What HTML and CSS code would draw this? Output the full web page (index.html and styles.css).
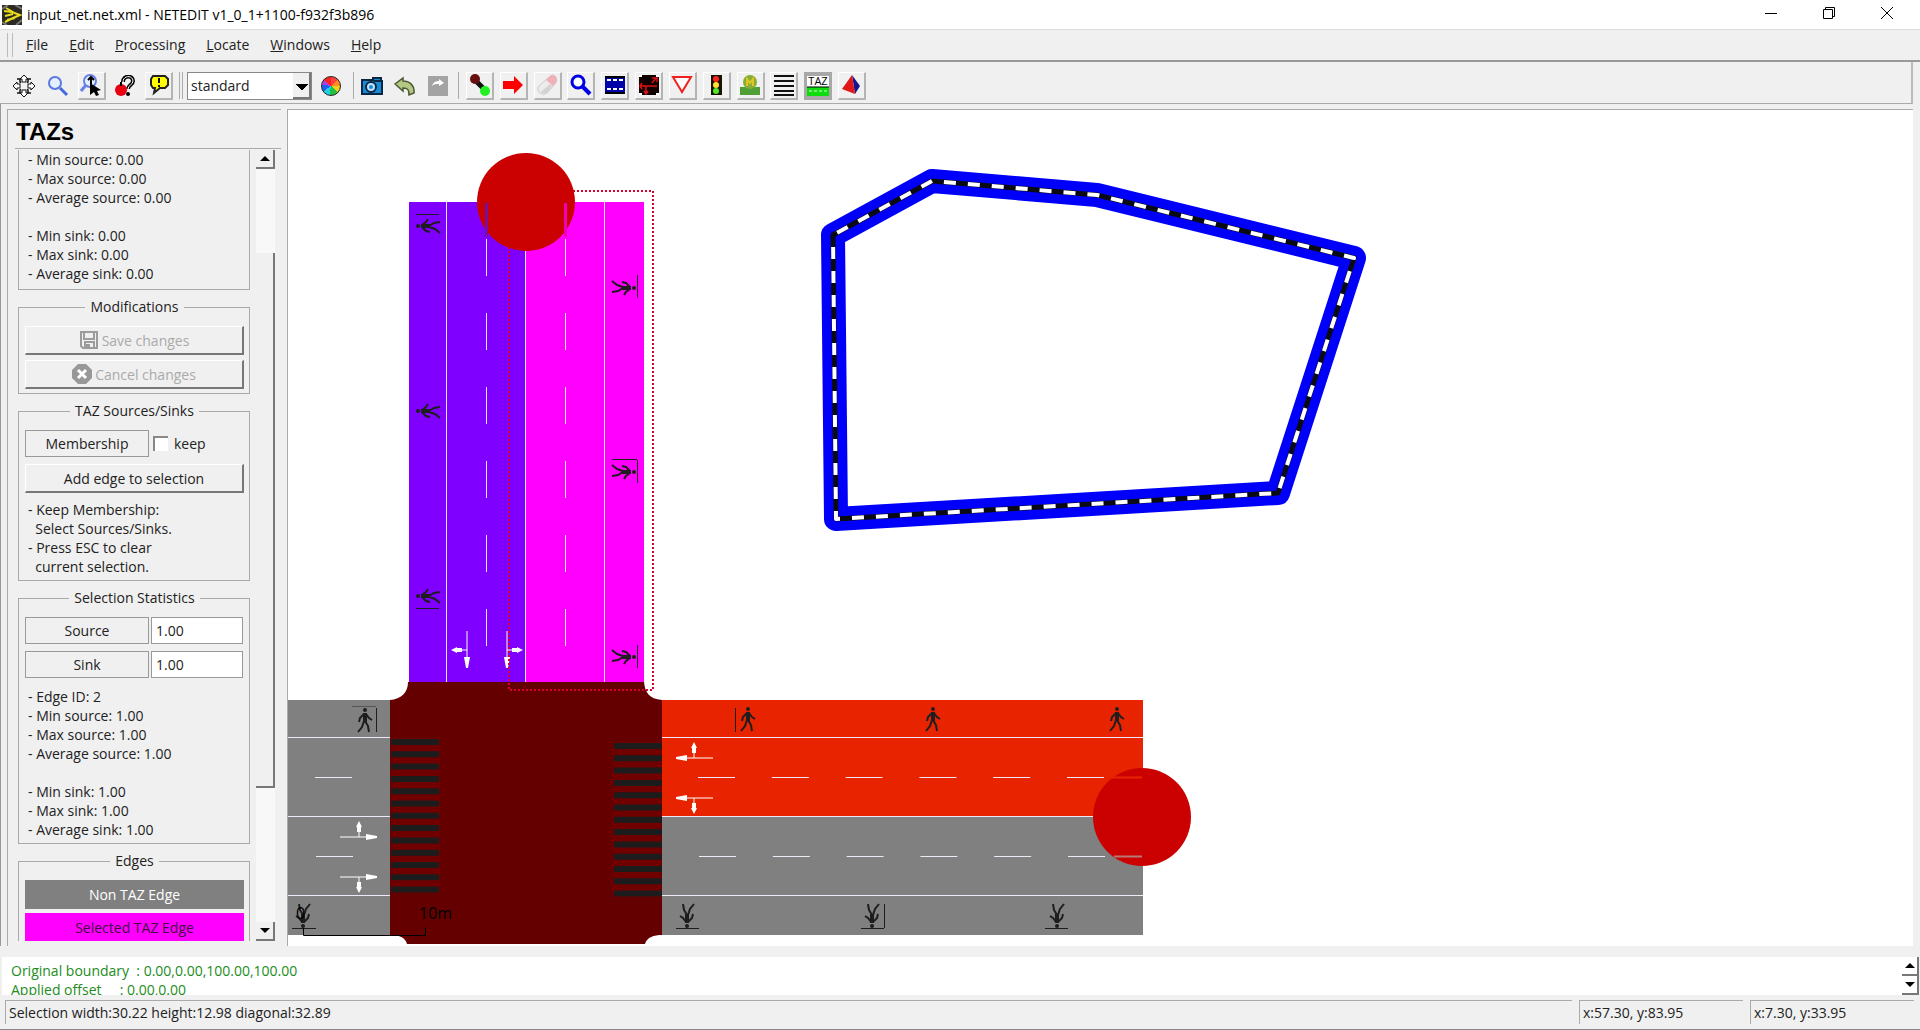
FILE: index.html
```html
<!DOCTYPE html>
<html lang="en">
<head>
  <meta charset="UTF-8" />
  <meta name="viewport" content="width=device-width, initial-scale=1.0"/>
  <title>input_net.net.xml - NETEDIT</title>
  <link rel="stylesheet" href="styles.css">
</head>
<body>

<!-- Title bar -->
<header class="titlebar">
  <svg class="app-icon" viewBox="0 0 20 20"><rect width="20" height="20" fill="#2b2922"/><path d="M0 4l6-4M13 0l7 4M0 17l5 3M14 20l6-5" stroke="#777" stroke-width="2"/><path d="M2 6l8 1 8 3-7 3-8 4M4 3l7 4M3 11l8-2M5 15l8-2" fill="none" stroke="#e8dc1c" stroke-width="2"/></svg>
  <h1>input_net.net.xml - NETEDIT v1_0_1+1100-f932f3b896</h1>
  <div class="window-buttons">
    <button aria-label="Minimize"><svg width="14" height="14"><path d="M1 7.500h12" stroke="#000"/></svg></button>
    <button aria-label="Restore"><svg width="14" height="14"><path d="M1.500 3.500h9v9h-9zM3.500 3.500v-2h9v9h-2" fill="none" stroke="#000"/></svg></button>
    <button aria-label="Close"><svg width="14" height="14"><path d="M1 1l12 12M13 1L1 13" stroke="#000"/></svg></button>
  </div>
</header>

<!-- Menu -->
<nav class="menubar">
  <span class="grip"></span>
  <button><u>F</u>ile</button>
  <button><u>E</u>dit</button>
  <button><u>P</u>rocessing</button>
  <button><u>L</u>ocate</button>
  <button><u>W</u>indows</button>
  <button><u>H</u>elp</button>
</nav>

<!-- Toolbar -->
<div class="toolbar">
  <div class="tools tools-view">
    <button aria-label="Recenter"><svg viewBox="0 0 22 22"><path d="M11 0l4 4h-2v3H9V4H7zM11 22l4-4h-2v-3H9v3H7zM0 11l4-4v2h3v4H4v2zM22 11l-4-4v2h-3v4h3v2z" fill="#fff" stroke="#111"/><path d="M4 4h3v3l1 1M18 4h-3v3l-1 1M4 18h3v-3l1-1M18 18h-3v-3l-1-1" fill="none" stroke="#111" stroke-width="1.500"/></svg></button>
    <button aria-label="Zoom"><svg viewBox="0 0 22 22"><circle cx="8" cy="8" r="6" fill="#e4f0ff" stroke="#5a78e0" stroke-width="2"/><path d="M13 13l7 7" stroke="#4468e0" stroke-width="3"/></svg></button>
    <button class="raised" aria-label="Zoom style"><svg viewBox="0 0 22 22"><circle cx="10" cy="7" r="6" fill="#e4f0ff" stroke="#6a80e8" stroke-width="2"/><path d="M6 11l-5 6" stroke="#6a80e8" stroke-width="3"/><path d="M11 3v7M8 6l3-3 3 3" fill="none" stroke="#000" stroke-width="2"/><path d="M10 9l11 7-4 1 2 4-3 1-2-4-4 3z" fill="#000"/></svg></button>
    <button aria-label="Tooltip"><svg viewBox="0 0 22 22"><path d="M9 7c0-7 10-7 10-1 0 4-5 4-5 8" fill="none" stroke="#000" stroke-width="4"/><path d="M9 7c0-7 10-7 10-1 0 4-5 4-5 8" fill="none" stroke="#fff" stroke-width="1"/><circle cx="14" cy="19" r="2"/><circle cx="7" cy="15" r="6" fill="#e80010"/><path d="M7 7v4" stroke="#000" stroke-width="2"/></svg></button>
    <button class="raised" aria-label="Messages"><svg viewBox="0 0 22 22"><path d="M5 2h12l3 3v6l-3 3h-5l-6 5 1-5H5l-2-3V5z" fill="#ffff00" stroke="#222" stroke-width="2"/><path d="M11 4v5M11 11v2" stroke="#111" stroke-width="2"/></svg></button>
  </div>
  <span class="sep double"></span>
  <select class="scheme" aria-label="Coloring scheme"><option>standard</option></select>
  <button class="wheel-button" aria-label="Edit colors"><span class="wheel"></span></button>
  <span class="sep"></span>
  <div class="tools tools-edit">
    <button aria-label="Snapshot"><svg viewBox="0 0 22 22"><path d="M1 5h11V3h8v3h1v13H1z" fill="#168bd8" stroke="#0c2744" stroke-width="2"/><path d="M13 5h6v2h-6z" fill="#0c2744"/><circle cx="10" cy="12" r="5" fill="#bfe4ff" stroke="#0c2744" stroke-width="2"/><circle cx="10" cy="12" r="2" fill="#168bd8"/></svg></button>
    <button aria-label="Undo"><svg viewBox="0 0 22 22"><path d="M1 9l8-6v3c7 0 12 5 11 12l-5 2c0-5-1-7-6-7v3z" fill="#b4c783" stroke="#4b5932" stroke-width="1.500"/></svg></button>
    <button aria-label="Redo"><svg viewBox="0 0 22 22"><path d="M1 1h20v20H1z" fill="#a3a3a3"/><path d="M5 11c1-4 4-5 7-5V4l5 4-5 3V9c-3 0-5 0-7 2z" fill="#fff"/></svg></button>
  </div>
  <span class="sep"></span>
  <div class="tools tools-mode">
    <button class="raised" aria-label="Create edge"><svg viewBox="0 0 22 22"><path d="M6 6l10 10" stroke="#111" stroke-width="5"/><circle cx="6" cy="5" r="5" fill="#681010"/><circle cx="16" cy="17" r="5" fill="#22ef22"/></svg></button>
    <button class="raised" aria-label="Move"><svg viewBox="0 0 22 22"><path d="M1 7h11V2l9 9-9 9v-5H1z" fill="#ff0000"/></svg></button>
    <button class="raised" aria-label="Delete"><svg viewBox="0 0 22 22"><path d="M13 3q4-4 7 0 2 4-1 7l-8 9q-4 3-7 0-4-4-1-7z" fill="#ececec" stroke="#ccc"/><path d="M13 3q4-4 7 0 2 4-1 7l-2 2-7-6z" fill="#efb0b8"/><path d="M5 18q3 3 6 1l5-7-2-2z" fill="#d2d2d2"/></svg></button>
    <button class="raised" aria-label="Inspect"><svg viewBox="0 0 22 22"><circle cx="8" cy="8" r="6" fill="#fff" stroke="#0000e6" stroke-width="3"/><path d="M12 12l8 8" stroke="#0000e6" stroke-width="4"/></svg></button>
    <button class="raised" aria-label="Select"><svg viewBox="0 0 22 22"><path d="M1 2h20v18H1z" fill="#0000a8"/><path d="M1 3h20M1 19h20" stroke="#000" stroke-width="2"/><path d="M3 6h16M3 15h16" stroke="#fff" stroke-width="2" stroke-dasharray="4 2"/></svg></button>
    <button class="raised" aria-label="Connect"><svg viewBox="0 0 22 22"><path d="M1 1h20v20H1z" fill="#100"/><path d="M2 12h17M8 12v8M14 9l4-5M14 4h5v4M6 17l2 3 2-3M4 9l-2 3 2 3" fill="none" stroke="#e01010" stroke-width="1.500"/><path d="M1 2h3M18 2h3M1 20h3M18 20h3" stroke="#fff" stroke-width="2"/></svg></button>
    <button class="raised" aria-label="Prohibitions"><svg viewBox="0 0 22 22"><path d="M2 3h18l-9 15z" fill="#fff" stroke="#f02020" stroke-width="2"/></svg></button>
    <button class="raised" aria-label="Traffic lights"><svg viewBox="0 0 22 22"><path d="M6 1h11v20H6z" fill="#181200"/><circle cx="11" cy="5" r="3" fill="#ff2222"/><circle cx="11" cy="11" r="3" fill="#ffe033"/><circle cx="11" cy="17" r="3" fill="#50e825"/></svg></button>
    <button class="raised" aria-label="Additionals"><svg viewBox="0 0 22 22"><path d="M1 13h5l3-2h4l3 2h5v8H1z" fill="#4f9f36"/><circle cx="11" cy="8" r="7" fill="#86ad38"/><path d="M8 12V5l3 4 3-4v7" fill="none" stroke="#e0c820" stroke-width="2"/></svg></button>
    <button class="raised" aria-label="Crossings"><svg viewBox="0 0 22 22"><path d="M1 2h20M1 7h20M1 12h20M1 17h20M1 21h20" stroke="#111" stroke-width="2"/></svg></button>
    <button class="pressed" aria-label="TAZ"><svg viewBox="0 0 24 24"><path d="M1 2h22v20H1z" fill="#fff"/><path d="M1 13h22v9H1z" fill="#0ddd0d"/><path d="M1 13h22" stroke="#000"/><path d="M3 17h19" stroke="#d8ffd8" stroke-dasharray="3 2"/><text x="12" y="11" font-size="11" text-anchor="middle">TAZ</text></svg></button>
    <button class="raised" aria-label="Shapes"><svg viewBox="0 0 22 22"><path d="M12 1l8 11-5 8z" fill="#151590"/><path d="M12 1L2 15l13 5z" fill="#e01818"/></svg></button>
  </div>
</div>

<main class="workspace">
  <!-- TAZ frame -->
  <aside class="sidebar">
    <h2>TAZs</h2>
    <div class="scroll-area">
      <div class="frames">
        <div class="group group-cut">
          <p class="info">- Min source: 0.00
- Max source: 0.00
- Average source: 0.00

- Min sink: 0.00
- Max sink: 0.00
- Average sink: 0.00</p>
        </div>

        <fieldset class="group">
          <legend>Modifications</legend>
          <button class="push" disabled><svg width="20" height="20" viewBox="0 0 20 20"><path d="M2 2h16v16H4l-2-2zM5 2v7h10V2M6 18v-6h9v6" fill="none" stroke="#9c9c9c" stroke-width="2"/><path d="M7 14h4v4H7z" fill="#9c9c9c"/></svg>Save changes</button>
          <button class="push" disabled><svg width="20" height="20" viewBox="0 0 20 20"><path d="M6 0h8l6 6v8l-6 6H6l-6-6V6z" fill="#989898"/><path d="M6 6l8 8M14 6l-8 8" stroke="#fff" stroke-width="3"/></svg>Cancel changes</button>
        </fieldset>

        <fieldset class="group">
          <legend>TAZ Sources/Sinks</legend>
          <div class="row">
            <button class="flat">Membership</button>
            <label class="keep"><input type="checkbox">keep</label>
          </div>
          <button class="push">Add edge to selection</button>
          <p class="info">- Keep Membership:
  Select Sources/Sinks.
- Press ESC to clear
  current selection.</p>
        </fieldset>

        <fieldset class="group">
          <legend>Selection Statistics</legend>
          <div class="row">
            <label class="flat" for="source">Source</label>
            <input class="value" id="source" type="text" value="1.00">
          </div>
          <div class="row">
            <label class="flat" for="sink">Sink</label>
            <input class="value" id="sink" type="text" value="1.00">
          </div>
          <p class="info">- Edge ID: 2
- Min source: 1.00
- Max source: 1.00
- Average source: 1.00

- Min sink: 1.00
- Max sink: 1.00
- Average sink: 1.00</p>
        </fieldset>

        <fieldset class="group">
          <legend>Edges</legend>
          <div class="swatch non-taz">Non TAZ Edge</div>
          <div class="swatch selected-taz">Selected TAZ Edge</div>
        </fieldset>
      </div>
      <div class="scrollbar">
        <button class="arrow up" aria-label="Scroll up"></button>
        <div class="track"><div class="thumb"></div></div>
        <button class="arrow down" aria-label="Scroll down"></button>
      </div>
    </div>
  </aside>

  <!-- Network view -->
  <section class="view">
    <svg class="network" role="img" aria-label="Road network">
      <defs>
        <g id="walker">
          <circle cx="1" cy="-10" r="2" fill="#1e1e1e"/>
          <path d="M0-6l-4 4-1 4M2-6l3 4 3 2M0 1l-2 6-4 5M1 1l3 5 1 6" fill="none" stroke="#1e1e1e" stroke-width="2"/>
          <path d="M-1-7h4l0 9h-4z" fill="#1e1e1e"/>
        </g>
        <g id="turn">
          <path d="M0 0v28M0 19h-6" stroke="#fff" stroke-width="1"/>
          <path d="M-3 26h6l-2 11h-2zM-5 17v4h-5v1l-6-3 6-3v1z" fill="#fff"/>
        </g>
      </defs>
      <g transform="translate(-288 -110)">
        <!-- roads -->
        <rect x="287" y="700" width="104" height="235" fill="#808080"/>
        <rect x="409" y="202" width="117" height="480" fill="#7f00ff"/>
        <rect x="526" y="202" width="118" height="480" fill="#ff00ff"/>
        <rect x="662" y="700" width="481" height="117" fill="#e82400"/>
        <rect x="662" y="817" width="481" height="118" fill="#808080"/>
        <path d="M408 682h236c1 10 5 17 18 18v235c-8 0-15 2-17 9H407c-2-7-8-9-17-9V700c11-1 18-7 18-18z" fill="#640000"/>

        <!-- crossings -->
        <rect x="391" y="738" width="49" height="155" fill="#700000"/>
        <rect x="613" y="742" width="49" height="155" fill="#700000"/>
        <path d="M415 739v154" stroke="#1c1c1c" stroke-width="48" stroke-dasharray="6 6.300"/>
        <path d="M638 743v154" stroke="#1c1c1c" stroke-width="48" stroke-dasharray="6 6.300"/>

        <!-- lane borders -->
        <g stroke="#f0e8f4" stroke-width="1">
          <path d="M446.500 202v480M525.500 202v480M604.500 202v480"/>
          <path d="M287 737.500h103M287 816.500h103M287 895.500h103M662 737.500h481M662 816.500h481M662 895.500h481"/>
          <path d="M486.500 239v407M565.500 239v407" stroke-dasharray="37 37"/>
          <path d="M698 777.500h408M699 856.500h407" stroke-dasharray="37 36.800"/>
          <path d="M315 777.500h37M316 856.500h37"/>
        </g>
        <use href="#turn" transform="translate(467 631)"/>
        <use href="#turn" transform="translate(507 631) scale(-1 1)"/>
        <use href="#turn" transform="translate(713 758) rotate(90)"/>
        <use href="#turn" transform="translate(713 798) rotate(90) scale(-1 1)"/>
        <use href="#turn" transform="translate(340 837) rotate(-90) scale(-1 1)"/>
        <use href="#turn" transform="translate(340 877) rotate(-90)"/>

        <!-- sidewalks -->
        <use href="#walker" transform="translate(364 720)"/>
        <use href="#walker" transform="translate(747 719)"/>
        <use href="#walker" transform="translate(932 719)"/>
        <use href="#walker" transform="translate(1116 719)"/>
        <use href="#walker" transform="translate(304 916) rotate(180)"/>
        <use href="#walker" transform="translate(688 916) rotate(180)"/>
        <use href="#walker" transform="translate(873 916) rotate(180)"/>
        <use href="#walker" transform="translate(1058 916) rotate(180)"/>
        <use href="#walker" transform="translate(624 287) rotate(90)"/>
        <use href="#walker" transform="translate(624 471) rotate(90)"/>
        <use href="#walker" transform="translate(624 656) rotate(90)"/>
        <use href="#walker" transform="translate(428 227) rotate(-90)"/>
        <use href="#walker" transform="translate(428 412) rotate(-90)"/>
        <use href="#walker" transform="translate(428 597) rotate(-90)"/>
        <path d="M376.500 708v24M735.500 708v24M884.500 904v24M292 928.500h24M676 928.500h23M861 928.500h23M1045 928.500h23M637.500 275v23M637.500 460v23M637.500 645v23M612 459.500h25M416 214.500h23M416 608.500h23" stroke="#1e1e1e"/>
        <path d="M352 706.500h24" stroke="#555"/>

        <!-- scale bar -->
        <path d="M303.500 928v7.500h122v-8" fill="none" stroke="#000"/>
        <text x="296" y="919" class="scale">0</text>
        <text x="419" y="919" class="scale">10m</text>

        <!-- selection frame and dead ends -->
        <rect x="509" y="191" width="144" height="499" fill="none" stroke="#d80030" stroke-width="2" stroke-dasharray="2 2"/>
        <circle cx="526" cy="202" r="49" fill="#cb0000"/>
        <circle cx="1142" cy="817" r="49" fill="#cb0000"/>
        <path d="M486.500 203v34" stroke="#7d0d9c" stroke-width="3"/>
        <path d="M565.500 203v34" stroke="#f000b4" stroke-width="3"/>
        <path d="M1110 777.500h32" stroke="#e82400" stroke-width="2"/>
        <path d="M1114 856.500h28" stroke="#b87878" stroke-width="2"/>

        <!-- TAZ shape -->
        <g fill="none" stroke-linejoin="round">
          <path d="M833 235L836 519 1278 493 1354 258 1097 195 932 181z" stroke="#0000fa" stroke-width="24"/>
          <path d="M833 235L836 519 1278 493 1354 258 1097 195 932 181z" stroke="#0a0a14" stroke-width="5"/>
          <path d="M833 235L836 519 1278 493 1354 258 1097 195 932 181z" stroke="#fff" stroke-width="4" stroke-dasharray="12" stroke-dashoffset="12"/>
        </g>
      </g>
    </svg>
  </section>
</main>

<!-- Messages -->
<section class="messages">
  <pre>Original boundary  : 0.00,0.00,100.00,100.00
Applied offset     : 0.00,0.00</pre>
  <div class="spin">
    <button class="arrow up" aria-label="Previous message"></button>
    <button class="arrow down" aria-label="Next message"></button>
  </div>
</section>

<footer class="statusbar">
  <span class="status-text">Selection width:30.22 height:12.98 diagonal:32.89</span>
  <span class="coords">x:57.30, y:83.95</span>
  <span class="coords">x:7.30, y:33.95</span>
</footer>

</body>
</html>
```
FILE: styles.css
```css
* { margin: 0; padding: 0; box-sizing: border-box; }
body {
  height: 100vh;
  display: flex;
  flex-direction: column;
  overflow: hidden;
  font-family: "Open Sans", "Noto Sans", sans-serif;
  font-size: 14px;
  color: #222;
  background: #f0f0f0;
}
button, input, select {
  font: inherit;
  color: inherit;
  border: none;
  background: none;
}

.titlebar {
  height: 29px;
  display: flex;
  align-items: center;
  padding-left: 2px;
  background: #fff;
}
.app-icon { width: 20px; height: 20px; }
.titlebar h1 {
  flex: 1;
  margin-left: 5px;
  font-size: 14px;
  font-weight: normal;
  color: #000;
}
.window-buttons { display: flex; padding-right: 4px; }
.window-buttons button { width: 58px; height: 29px; }

.menubar {
  height: 33px;
  display: flex;
  align-items: center;
  gap: 21px;
  border-top: 1px solid #ddd;
  border-bottom: 2px solid #999;
}
.grip {
  width: 6px;
  height: 24px;
  margin-left: 7px;
  margin-right: -8px;
  border-left: 1px solid #bbb;
  border-right: 1px solid #bbb;
}
.menubar button { line-height: 20px; }

.toolbar {
  height: 42px;
  display: flex;
  align-items: center;
  padding: 6px 0 0 10px;
  margin-right: 7px;
  border-right: 2px solid #bbb;
  border-bottom: 1px solid #aaa;
}
.tools {
  display: flex;
  justify-content: space-between;
}
.tools-view { width: 163px; }
.tools-edit { width: 94px; margin-left: 4px; }
.tools-mode { width: 400px; margin-left: 7px; }
.tools button {
  width: 28px;
  height: 28px;
  display: flex;
  align-items: center;
  justify-content: center;
}
.tools svg { width: 22px; height: 22px; }
.tools .raised {
  border-top: 1px solid #fff;
  border-left: 1px solid #fff;
  border-right: 2px solid #b4b4b4;
  border-bottom: 2px solid #b4b4b4;
}
.tools .pressed { background: #a8a8a8; }
.tools .pressed svg { width: 24px; height: 24px; }
.sep {
  width: 1px;
  height: 27px;
  margin-left: 6px;
  background: #aaa;
}
.sep.double {
  width: 4px;
  background: none;
  border-left: 1px solid #aaa;
  border-right: 1px solid #aaa;
}
.scheme {
  width: 125px;
  height: 28px;
  margin-left: 4px;
  padding-left: 3px;
  appearance: none;
  border: 1px solid #888;
  background:
    linear-gradient(#777, #777) right 0 top 0 / 2px 100% no-repeat,
    linear-gradient(#777, #777) right 0 bottom 0 / 18px 2px no-repeat,
    conic-gradient(from -45deg at 50% 100%, #000 90deg, transparent 0) right 3px top 11px / 12px 6px no-repeat,
    linear-gradient(#f0f0f0, #f0f0f0) right 0 top 0 / 18px 100% no-repeat,
    #fff;
}
.wheel-button {
  width: 30px;
  height: 28px;
  margin: 0 1px 0 4px;
  display: grid;
  place-items: center;
}
.wheel {
  width: 20px;
  height: 20px;
  border: 1px solid #222;
  border-radius: 50%;
  background: conic-gradient(#ff4040 0 45deg, #ff8c20 0 90deg, #f0d020 0 135deg, #20c040 0 190deg, #20d0e0 0 235deg, #2060f0 0 280deg, #b040e0 0 310deg, #ff2020 0);
}

.workspace {
  flex: 1;
  min-height: 0;
  display: flex;
  gap: 6px;
  padding: 5px 7px 0 6px;
  border-left: 1px solid #999;
}
.sidebar {
  width: 274px;
  display: flex;
  flex-direction: column;
  border-top: 1px solid #aaa;
  border-left: 1px solid #aaa;
}
.sidebar h2 {
  height: 39px;
  margin: 0 0 1px 7px;
  padding-left: 1px;
  line-height: 44px;
  font-family: "Liberation Sans", Arial, sans-serif;
  font-size: 24px;
  color: #000;
  border-bottom: 1px solid #aaa;
}
.scroll-area {
  flex: 1;
  min-height: 0;
  display: flex;
  justify-content: space-between;
  padding: 0 6px 5px 10px;
}
.frames {
  width: 232px;
  display: flex;
  flex-direction: column;
  gap: 5px;
  overflow: hidden;
}
.group {
  flex-shrink: 0;
  padding: 7px 5px 4px 6px;
  border: 1px solid #aaa;
}
.group legend {
  margin: 0 auto;
  padding: 0 5px;
  line-height: 24px;
}
.group-cut { border-top: none; padding-top: 0; padding-bottom: 6px; }
.info {
  padding-left: 3px;
  line-height: 19px;
  white-space: pre;
}
.push {
  width: 100%;
  height: 29px;
  display: flex;
  align-items: center;
  justify-content: center;
  gap: 3px;
  border-top: 1px solid #fff;
  border-left: 1px solid #fff;
  border-right: 2px solid #777;
  border-bottom: 2px solid #777;
}
.push + .push { margin-top: 5px; }
.push:disabled { color: #aaa; }
.row {
  display: flex;
  align-items: center;
  gap: 2px;
  margin-bottom: 7px;
}
.flat {
  width: 124px;
  height: 27px;
  line-height: 25px;
  text-align: center;
  border: 1px solid #999;
}
.value {
  width: 92px;
  height: 27px;
  padding-left: 4px;
  background: #fff;
  border: 1px solid #999;
}
.keep {
  display: flex;
  align-items: center;
  gap: 6px;
  padding-left: 2px;
}
.keep input {
  width: 15px;
  height: 15px;
  appearance: none;
  background: #fff;
  border-top: 2px solid #888;
  border-left: 2px solid #888;
}
.push + .info { padding-top: 7px; }
.row + .info { padding-top: 2px; }
.swatch {
  height: 29px;
  line-height: 29px;
  text-align: center;
}
.swatch + .swatch { margin-top: 4px; }
.non-taz { background: #808080; color: #fff; }
.selected-taz { background: #ff00ff; color: #401040; }

.scrollbar {
  width: 19px;
  display: flex;
  flex-direction: column;
}
.arrow {
  width: 19px;
  height: 19px;
  display: grid;
  place-items: center;
  border-right: 2px solid #777;
  border-bottom: 2px solid #777;
}
.arrow::before {
  content: "";
  border: 5px solid transparent;
}
.arrow.up::before { border-top: none; border-bottom-color: #000; }
.arrow.down::before { border-bottom: none; border-top-color: #000; }
.track { flex: 1; padding-top: 84px; background: #f8f8f8; }
.thumb {
  height: 80%;
  background: #f0f0f0;
  border-right: 2px solid #777;
  border-bottom: 2px solid #777;
}

.view {
  flex: 1;
  min-width: 0;
  background: #fff;
  border-top: 1px solid #aaa;
  border-left: 1px solid #aaa;
}
.network { display: block; width: 100%; height: 100%; }
.scale { font-size: 16px; fill: #000; }

.messages {
  height: 38px;
  display: flex;
  justify-content: space-between;
  margin: 11px 1px 0 2px;
  padding-left: 9px;
  background: #fff;
  overflow: hidden;
}
.messages pre {
  padding-top: 4px;
  font: inherit;
  line-height: 19px;
  color: #1c8c1c;
}
.spin { width: 17px; display: flex; flex-direction: column; }
.spin .arrow { width: 17px; }

.statusbar {
  height: 35px;
  display: flex;
  gap: 7px;
  padding: 5px 6px 5px 5px;
  border-bottom: 1px solid #888;
}
.statusbar span {
  padding-left: 3px;
  line-height: 24px;
  border-top: 1px solid #aaa;
  border-left: 1px solid #aaa;
}
.status-text { flex: 1; }
.coords { width: 164px; }
```
